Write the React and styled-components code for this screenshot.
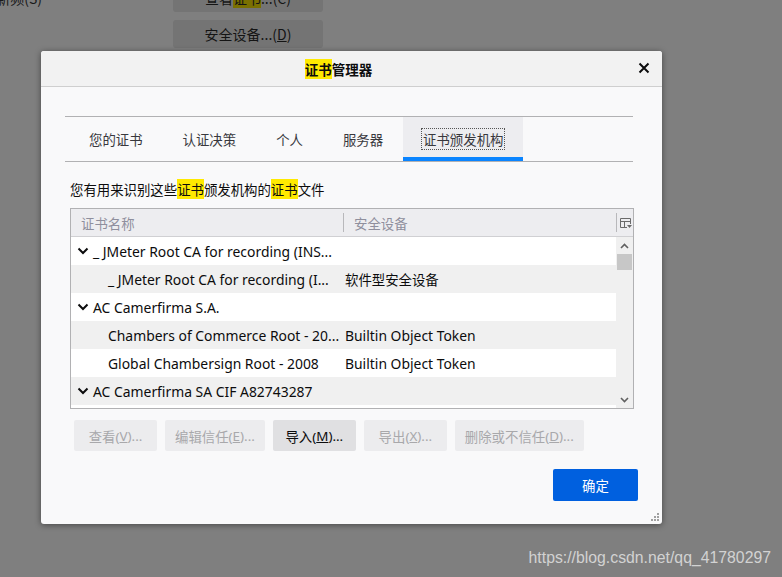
import React from "react";
import styled, { createGlobalStyle } from "styled-components";

const GlobalStyle = createGlobalStyle`
  html, body { margin: 0; padding: 0; background: #7f7f7f; }
  * { box-sizing: border-box; }
`;

const FONT = `"Noto Sans", "Noto Sans CJK SC", sans-serif`;

const Page = styled.div`
  position: relative;
  width: 782px;
  height: 577px;
  overflow: hidden;
  background: #7f7f7f;
  font-family: ${FONT};
`;

const Backdrop = styled.div`
  display: flex;
  align-items: flex-start;
  margin-top: -16px;
`;

const BgLabel = styled.div`
  width: 173px;
  flex: none;
  font-family: "Noto Sans CJK SC", sans-serif;
  font-size: 14px;
  color: #1a1a1a;
  line-height: 28px;
  white-space: nowrap;
  direction: rtl;
  text-align: left;
  overflow: hidden;
`;

const BgLabelText = styled.span`
  direction: ltr;
  unicode-bidi: isolate;
  margin-right: 131px;
`;

const BgColumn = styled.div`
  display: flex;
  flex-direction: column;
  gap: 8px;
`;

const BgButton = styled.div`
  width: 150px;
  height: 28px;
  border-radius: 3px;
  background: #747474;
  color: #141414;
  font-family: "Noto Sans CJK SC", sans-serif;
  font-size: 14px;
  display: flex;
  align-items: center;
  justify-content: center;
`;

const DimMark = styled.span`
  background: #7a7000;
`;

const Dialog = styled.div`
  position: absolute;
  left: 41px;
  top: 51px;
  width: 621px;
  height: 473px;
  background: #f9f9fa;
  border-radius: 3px;
  box-shadow: 0 1px 6px rgba(0, 0, 0, 0.45);
  display: flex;
  flex-direction: column;
  overflow: hidden;
`;

const Header = styled.div`
  position: relative;
  height: 36px;
  flex: none;
  background: #f2f2f2;
  border-bottom: 1px solid #cfcfcf;
  display: flex;
  align-items: center;
  justify-content: center;
  padding-right: 26px;
`;

const Title = styled.div`
  font-family: "Noto Sans CJK SC", sans-serif;
  font-size: 13.5px;
  font-weight: 700;
  color: #0c0c0d;
  line-height: 18px;
`;

const Mark = styled.span`
  background: #ffea00;
`;

const CloseBtn = styled.div`
  position: absolute;
  right: 12px;
  top: 11px;
  width: 12px;
  height: 12px;
  display: flex;
`;

const Body = styled.div`
  flex: 1;
  display: flex;
  flex-direction: column;
  padding: 29px 29px 0 24px;
`;

const TabStrip = styled.div`
  display: flex;
  border-top: 1px solid #b1b1b3;
  border-bottom: 1px solid #b1b1b3;
  padding-left: 4px;
`;

const Tab = styled.div`
  height: 44px;
  padding: 4px 20px 0;
  display: flex;
  align-items: center;
  font-family: "Noto Sans CJK SC", sans-serif;
  font-size: 13.4px;
  color: #38383d;
  background: ${(p) => (p.$active ? "#ededf0" : "transparent")};
  border-bottom: 4px solid ${(p) => (p.$active ? "#0a84ff" : "transparent")};
`;

const TabLabel = styled.span`
  outline: ${(p) => (p.$active ? "1px dotted #555" : "none")};
  outline-offset: 1px;
  line-height: 18px;
`;

const Panel = styled.div`
  display: flex;
  flex-direction: column;
  padding-left: 5px;
  margin-right: -1px;
`;

const Description = styled.div`
  margin-top: 18px;
  font-family: "Noto Sans CJK SC", sans-serif;
  font-size: 13.4px;
  line-height: 18px;
  color: #0c0c0d;
`;

const Table = styled.div`
  margin-top: 10px;
  height: 201px;
  border: 1px solid #b1b1b3;
  background: #fff;
  display: flex;
  flex-direction: column;
`;

const HeadRow = styled.div`
  height: 28px;
  flex: none;
  display: flex;
  align-items: center;
  background: #ededf0;
  border-bottom: 1px solid #d0d0d3;
`;

const HeadCell = styled.div`
  width: ${(p) => p.$w || 0}px;
  flex: ${(p) => (p.$grow ? 1 : "none")};
  height: 100%;
  display: flex;
  align-items: center;
  padding-left: 10px;
  font-family: "Noto Sans CJK SC", sans-serif;
  font-size: 13.4px;
  color: #8f8f9d;
`;

const Divider = styled.div`
  width: 1px;
  height: 19px;
  background: #b8b8bb;
  flex: none;
`;

const Picker = styled.div`
  width: 15px;
  height: 100%;
  flex: none;
  display: flex;
  align-items: center;
  justify-content: center;
  margin-left: 1px;
`;

const ListArea = styled.div`
  flex: 1;
  display: flex;
  min-height: 0;
`;

const Rows = styled.div`
  flex: 1;
  display: flex;
  flex-direction: column;
`;

const Row = styled.div`
  height: 28px;
  flex: none;
  display: flex;
  align-items: center;
  background: ${(p) => (p.$alt ? "#f0f0f0" : "#ffffff")};
  font-family: ${FONT};
  font-size: 13.9px;
  color: #0c0c0d;
  white-space: nowrap;
`;

const NameCell = styled.div`
  width: 272px;
  flex: none;
  display: flex;
  align-items: center;
  padding-left: ${(p) => (p.$child ? 37 : 6)}px;
  gap: 4px;
  overflow: hidden;
`;

const DeviceCell = styled.div`
  flex: 1;
  padding-left: 2px;
  font-size: ${(p) => (p.$cjk ? "13.4px" : "13.9px")};
`;

const Scrollbar = styled.div`
  width: 17px;
  flex: none;
  background: #f0f0f0;
  display: flex;
  flex-direction: column;
  align-items: center;
`;

const ScrollArrow = styled.div`
  height: 17px;
  width: 100%;
  display: flex;
  align-items: center;
  justify-content: center;
`;

const Thumb = styled.div`
  width: 15px;
  height: 16px;
  background: #c7c7c7;
`;

const Spacer = styled.div`
  flex: 1;
`;

const ButtonRow = styled.div`
  margin-top: 11px;
  margin-left: 4px;
  display: flex;
  gap: 8px;
`;

const Button = styled.div`
  height: 31px;
  min-width: 83px;
  padding: 0 10px;
  display: flex;
  align-items: center;
  justify-content: center;
  border-radius: 2px;
  font-family: ${FONT};
  font-size: 13.4px;
  background: ${(p) => (p.$disabled ? "#ececee" : "#e0e0e2")};
  color: ${(p) => (p.$disabled ? "#a8a8ab" : "#0c0c0d")};
`;

const U = styled.span`
  text-decoration: underline;
`;

const Footer = styled.div`
  margin-top: 18px;
  display: flex;
  justify-content: flex-end;
  margin-right: -4px;
`;

const Primary = styled.div`
  width: 85px;
  height: 32px;
  border-radius: 2px;
  background: #0060df;
  color: #fff;
  font-family: "Noto Sans CJK SC", sans-serif;
  font-size: 13.4px;
  display: flex;
  align-items: center;
  justify-content: center;
`;

const Grip = styled.div`
  position: absolute;
  right: 2px;
  bottom: 2px;
  width: 9px;
  height: 9px;
  display: flex;
`;

const Watermark = styled.div`
  position: absolute;
  right: 11px;
  bottom: 10px;
  font-family: "Liberation Sans", Arial, sans-serif;
  font-size: 15.8px;
  color: #d2d2d2;
`;

const Chevron = () => (
  <svg width="12" height="8" viewBox="0 0 12 8">
    <polyline points="1.5,1.5 6,6 10.5,1.5" fill="none" stroke="#0c0c0d" strokeWidth="2" />
  </svg>
);

const rows = [
  { name: "_ JMeter Root CA for recording (INS...", parent: true },
  { name: "_ JMeter Root CA for recording (I...", device: "软件型安全设备", cjk: true, alt: true },
  { name: "AC Camerfirma S.A.", parent: true },
  { name: "Chambers of Commerce Root - 20...", device: "Builtin Object Token", alt: true },
  { name: "Global Chambersign Root - 2008", device: "Builtin Object Token" },
  { name: "AC Camerfirma SA CIF A82743287", parent: true, alt: true },
];

const tabs = ["您的证书", "认证决策", "个人", "服务器", "证书颁发机构"];

export default function App() {
  return (
    <Page>
      <GlobalStyle />
      <Backdrop>
        <BgLabel>
          <BgLabelText>自动更新频(S)</BgLabelText>
        </BgLabel>
        <BgColumn>
          <BgButton>
            查看<DimMark>证书</DimMark>...(C)
          </BgButton>
          <BgButton>
            安全设备...(<U>D</U>)
          </BgButton>
        </BgColumn>
      </Backdrop>

      <Dialog>
        <Header>
          <Title>
            <Mark>证书</Mark>管理器
          </Title>
          <CloseBtn>
            <svg width="12" height="12" viewBox="0 0 12 12">
              <path d="M1.5 1.5 L10.5 10.5 M10.5 1.5 L1.5 10.5" stroke="#0c0c0d" strokeWidth="2" />
            </svg>
          </CloseBtn>
        </Header>
        <Body>
          <TabStrip>
            {tabs.map((t, i) => (
              <Tab key={t} $active={i === 4}>
                <TabLabel $active={i === 4}>{t}</TabLabel>
              </Tab>
            ))}
          </TabStrip>
          <Panel>
            <Description>
              您有用来识别这些<Mark>证书</Mark>颁发机构的<Mark>证书</Mark>文件
            </Description>
            <Table>
              <HeadRow>
                <HeadCell $w={272}>证书名称</HeadCell>
                <Divider />
                <HeadCell $grow>安全设备</HeadCell>
                <Divider />
                <Picker>
                  <svg width="12" height="12" viewBox="0 0 12 12">
                    <path d="M0.5 1.5 H10.5 V7 M0.5 1.5 V10.5 H7 M0.5 4.5 H10.5 M4.5 4.5 V10.5" fill="none" stroke="#6a6a6a" strokeWidth="1" />
                    <path d="M7 8 H12 L9.5 11 Z" fill="#6a6a6a" />
                  </svg>
                </Picker>
              </HeadRow>
              <ListArea>
                <Rows>
                  {rows.map((r, i) => (
                    <Row key={i} $alt={r.alt}>
                      <NameCell $child={!r.parent}>
                        {r.parent && <Chevron />}
                        <span>{r.name}</span>
                      </NameCell>
                      <DeviceCell $cjk={r.cjk}>{r.device || ""}</DeviceCell>
                    </Row>
                  ))}
                </Rows>
                <Scrollbar>
                  <ScrollArrow>
                    <svg width="9" height="6" viewBox="0 0 9 6">
                      <polyline points="1,5 4.5,1.5 8,5" fill="none" stroke="#606060" strokeWidth="1.6" />
                    </svg>
                  </ScrollArrow>
                  <Thumb />
                  <Spacer />
                  <ScrollArrow>
                    <svg width="9" height="6" viewBox="0 0 9 6">
                      <polyline points="1,1 4.5,4.5 8,1" fill="none" stroke="#606060" strokeWidth="1.6" />
                    </svg>
                  </ScrollArrow>
                </Scrollbar>
              </ListArea>
            </Table>
            <ButtonRow>
              <Button $disabled>
                查看(<U>V</U>)...
              </Button>
              <Button $disabled>
                编辑信任(<U>E</U>)...
              </Button>
              <Button>
                导入(<U>M</U>)...
              </Button>
              <Button $disabled>
                导出(<U>X</U>)...
              </Button>
              <Button $disabled>
                删除或不信任(<U>D</U>)...
              </Button>
            </ButtonRow>
            <Footer>
              <Primary>确定</Primary>
            </Footer>
          </Panel>
        </Body>
        <Grip>
          <svg width="9" height="9" viewBox="0 0 9 9">
            <g fill="#a0a0a0">
              <rect x="6" y="0" width="2" height="2" />
              <rect x="3" y="3" width="2" height="2" />
              <rect x="6" y="3" width="2" height="2" />
              <rect x="0" y="6" width="2" height="2" />
              <rect x="3" y="6" width="2" height="2" />
              <rect x="6" y="6" width="2" height="2" />
            </g>
          </svg>
        </Grip>
      </Dialog>
      <Watermark>https://blog.csdn.net/qq_41780297</Watermark>
    </Page>
  );
}
